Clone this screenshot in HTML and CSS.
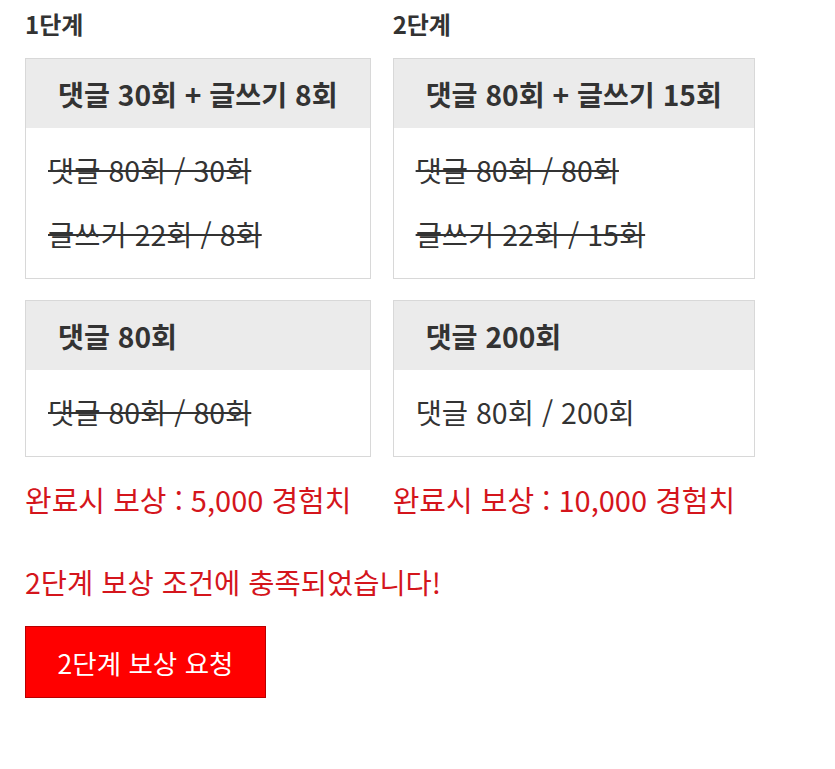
FILE: index.html
```html
<!DOCTYPE html>
<html lang="ko">
<head>
<meta charset="utf-8">
<title>단계별 보상</title>
<link rel="stylesheet" href="styles.css">
</head>
<body>

<div class="stages">
  <h3 class="stage-title">1단계</h3>
  <h3 class="stage-title">2단계</h3>

  <div class="mission">
    <div class="mission-head">댓글 30회 + 글쓰기 8회</div>
    <ul class="mission-body">
      <li class="done">댓글 80회 / 30회</li>
      <li class="done">글쓰기 22회 / 8회</li>
    </ul>
  </div>
  <div class="mission">
    <div class="mission-head">댓글 80회 + 글쓰기 15회</div>
    <ul class="mission-body">
      <li class="done">댓글 80회 / 80회</li>
      <li class="done">글쓰기 22회 / 15회</li>
    </ul>
  </div>

  <div class="mission">
    <div class="mission-head">댓글 80회</div>
    <ul class="mission-body">
      <li class="done">댓글 80회 / 80회</li>
    </ul>
  </div>
  <div class="mission">
    <div class="mission-head">댓글 200회</div>
    <ul class="mission-body">
      <li>댓글 80회 / 200회</li>
    </ul>
  </div>

  <p class="reward">완료시 보상 : 5,000 경험치</p>
  <p class="reward">완료시 보상 : 10,000 경험치</p>
</div>

<p class="notice">2단계 보상 조건에 충족되었습니다!</p>

<button class="btn-reward" type="button">2단계 보상 요청</button>

</body>
</html>
```

FILE: styles.css
```css
BODY {
    margin : 0;
    padding : 0 25px;
    font-family : "Noto Sans CJK KR", "Noto Sans", sans-serif;
    color : #333;
    background : #fff;
}

.stages {
    display : grid;
    grid-template-columns : max-content max-content;
    column-gap : 22px;
    row-gap : 21px;
    align-items : start;
}

.stage-title {
    margin : 0 0 -2px;
    padding-top : 9px;
    font-size : 24px;
    font-weight : bold;
    line-height : 30px;
}

.mission {
    border : 1px solid #d8d8d8;
}
.mission-head {
    background : #ebebeb;
    padding : 0 32px;
    height : 69px;
    line-height : 69px;
    font-size : 28.2px;
    font-weight : bold;
}
.mission-body {
    list-style : none;
    margin : 0;
    padding : 10px 22px 12px;
}
.mission-body LI {
    font-size : 28.5px;
    line-height : 64px;
}
.mission-body LI.done {
    text-decoration : line-through;
}

.reward {
    margin : 0;
    padding-top : 1px;
    font-size : 29px;
    line-height : 40px;
    color : #d4151c;
}

.notice {
    margin : 43px 0 0;
    font-size : 28.5px;
    line-height : 40px;
    color : #d4151c;
}

.btn-reward {
    display : block;
    margin-top : 24px;
    width : 241px;
    height : 72px;
    background : #ff0000;
    border : 1px solid #b80000;
    color : #fff;
    font-family : inherit;
    font-size : 26.5px;
    cursor : pointer;
}
```
